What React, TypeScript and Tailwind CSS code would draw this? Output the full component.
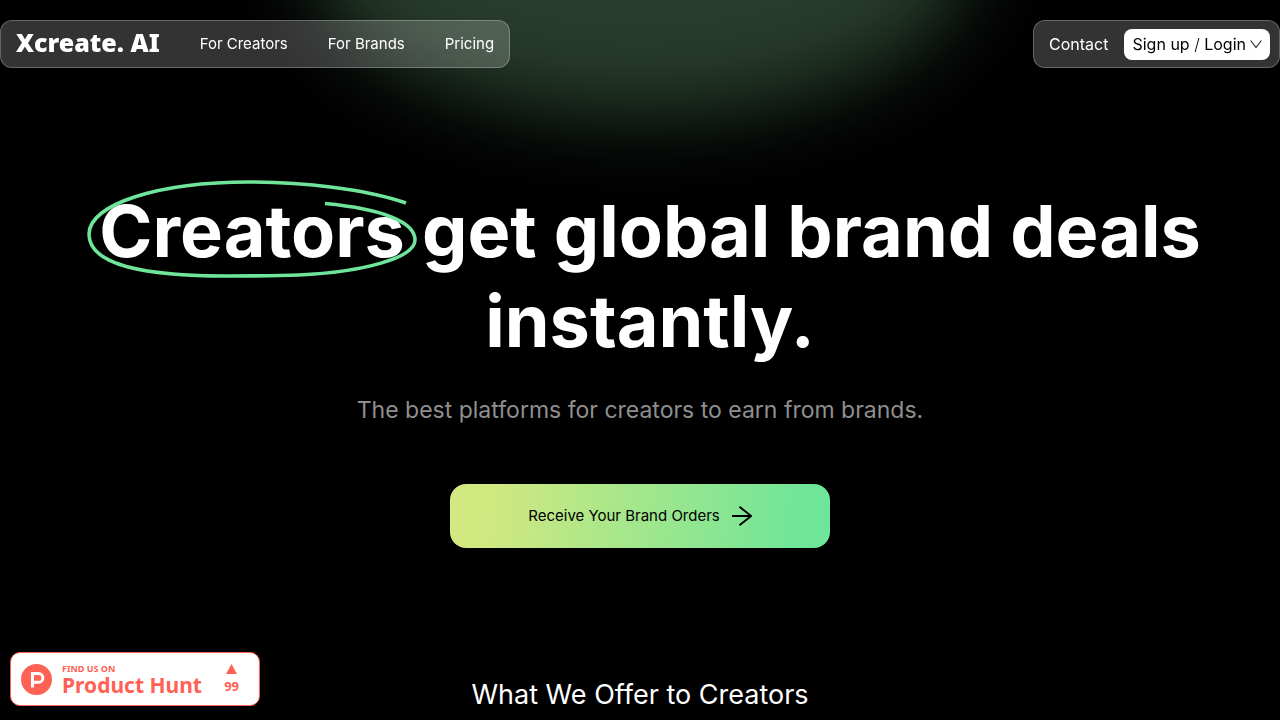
import { ReactNode } from 'react';

const navLinks = [
  { label: 'For Creators', href: '#creators' },
  { label: 'For Brands', href: '#brands' },
  { label: 'Pricing', href: '#pricing' },
];

function Header() {
  return (
    <header className="relative flex items-start justify-between pt-5">
      <nav className="flex h-12 items-center gap-10 rounded-xl border border-white/25 bg-white/20 px-[15px] backdrop-blur-sm">
        <a
          href="#home"
          className="pb-1 font-['Noto_Sans','Open_Sans',sans-serif] text-[25px] leading-8 font-black text-white"
        >
          Xcreate. AI
        </a>
        {navLinks.map((link) => (
          <a key={link.href} href={link.href} className="text-[15px] leading-6 text-white">
            {link.label}
          </a>
        ))}
      </nav>

      <div className="flex h-12 items-center gap-4 rounded-xl border border-white/25 bg-white/20 pr-[9px] pl-[15px] backdrop-blur-sm">
        <a href="#contact" className="text-base leading-6 text-white">
          Contact
        </a>
        <button
          type="button"
          className="flex h-[31px] items-center gap-1 rounded-lg bg-white px-2 text-base text-black"
        >
          <span>
            Sign up <span className="font-light">/</span> Login
          </span>
          <svg className="h-3 w-3" viewBox="0 0 12 12" fill="none" stroke="#222" strokeWidth="1.1" aria-hidden="true">
            <path d="M0.700 2.500L6 9.500L11.300 2.500" />
          </svg>
        </button>
      </div>
    </header>
  );
}

function CircledWord({ children }: { children: ReactNode }) {
  return (
    <span className="relative inline-block">
      {children}
      <svg
        className="absolute -top-1.5 -left-3 h-[98px] w-[330px] max-w-none"
        viewBox="0 0 330 98"
        fill="none"
        stroke="#6ee599"
        strokeWidth="3.6"
        aria-hidden="true"
      >
        <path d="M319 23C278 9 216 2 162 2C72 2 2 24 2 54C2 86 60 96 140 96C174 96 190 96 212 95C276 92 328 78 328 60C328 42 296 29 238 23.500" />
      </svg>
    </span>
  );
}

function Hero() {
  return (
    <section className="relative flex flex-col items-center pt-[118px] text-center">
      <h1 className="pl-5 text-[72px] leading-[90px] font-bold text-white">
        <CircledWord>Creators</CircledWord> get global brand deals instantly.
      </h1>
      <p className="mt-7 text-[23px] leading-8 text-[#8f8f8f]">
        The best platforms for creators to earn from brands.
      </p>
      <button
        type="button"
        className="mt-[58px] flex h-16 w-[380px] items-center justify-center gap-3 rounded-2xl bg-linear-[97deg] from-[#d2e880] from-10% to-[#6ee599] to-93% text-[15px] text-black"
      >
        Receive Your Brand Orders
        <svg className="h-5 w-5" viewBox="0 0 20 20" fill="none" stroke="currentColor" strokeWidth="2" aria-hidden="true">
          <path d="M0 10H19M7.500 0.700C10 3 15 6.500 19 10C15 13.500 10 17 7.500 19.300" />
        </svg>
      </button>
    </section>
  );
}

function ProductHuntBadge() {
  return (
    <a
      href="#product-hunt"
      className="fixed bottom-3.5 left-2.5 flex h-[54px] w-[250px] items-center rounded-[10px] border border-[#ff6154] bg-white px-2.5 font-['Noto_Sans','Open_Sans',sans-serif] font-bold text-[#ff6154]"
    >
      <svg className="h-[31px] w-[31px] shrink-0" viewBox="0 0 31 31" aria-hidden="true">
        <circle cx="15.500" cy="15.500" r="15.500" fill="#ff6154" />
        <path
          d="M11.500 23.500V9.500H17.500A4.400 4.400 0 0 1 17.500 18.300H11.500"
          fill="none"
          stroke="#fff"
          strokeWidth="3"
        />
      </svg>
      <span className="ml-2.5 flex flex-col">
        <span className="text-[9px] leading-3">FIND US ON</span>
        <span className="text-[21px] leading-5">Product Hunt</span>
      </span>
      <span className="mr-2.5 ml-auto flex flex-col items-center gap-1">
        <svg className="h-2.5 w-[11px]" viewBox="0 0 11 10" fill="currentColor" aria-hidden="true">
          <path d="M5.500 0L11 10H0Z" />
        </svg>
        <span className="text-[13px] leading-4">99</span>
      </span>
    </a>
  );
}

export default function App() {
  return (
    <div className="relative min-h-screen overflow-hidden bg-black font-['Inter',sans-serif]">
      <div className="absolute -top-[204px] left-1/2 h-80 w-[660px] -translate-x-1/2 rounded-[50%] bg-[#273c2c] blur-[40px]" />
      <Header />
      <main>
        <Hero />
        <h2 className="relative mt-[129px] text-center text-[27px] leading-9 text-white">
          What We Offer to Creators
        </h2>
      </main>
      <ProductHuntBadge />
    </div>
  );
}
